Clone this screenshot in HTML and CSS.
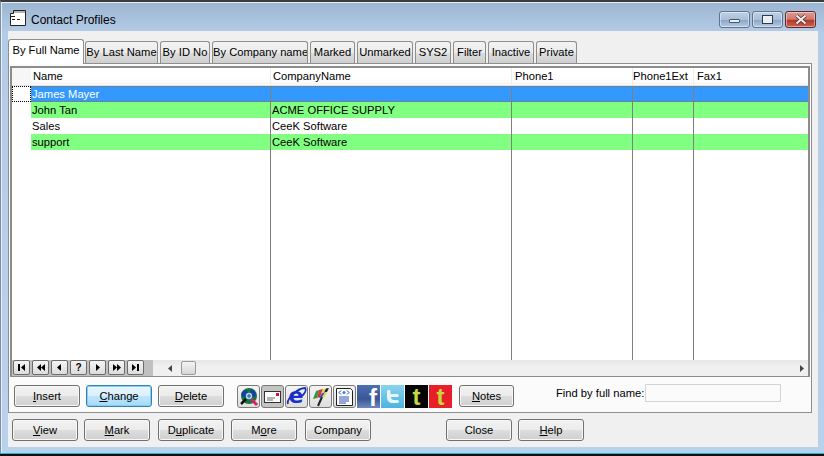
FILE: index.html
```html
<!DOCTYPE html>
<html lang="en">
<head>
<meta charset="utf-8">
<title>Contact Profiles</title>
<link rel="stylesheet" href="styles.css">
</head>
<body>
<div class="window">
  <header class="titlebar">
    <svg class="appicon" width="16" height="17" viewBox="0 0 16 17"><path d="M3.5.5H15.5V15.5H.5V3.5H3.5Z" fill="#fff" stroke="#222"/><rect x="4" y="1" width="11" height="2" fill="#b5b5b5"/><rect x="1" y="6" width="4" height="1" fill="#222"/><rect x="2" y="9" width="3" height="1" fill="#222"/><rect x="7" y="9" width="3" height="1" fill="#222"/></svg>
    <span class="title">Contact Profiles</span>
    <div class="caption-btns">
      <div class="cap"><span class="cap-min"></span></div>
      <div class="cap"><span class="cap-max"></span></div>
      <div class="cap cap-close"><svg width="14" height="11" viewBox="0 0 14 11"><path d="M2.5 1.5 11.5 9.5M11.5 1.5 2.5 9.5" stroke="#3a2a2a" stroke-width="3.6"/><path d="M2.5 1.5 11.5 9.5M11.5 1.5 2.5 9.5" stroke="#f4ecec" stroke-width="2.2"/></svg></div>
    </div>
  </header>
  <main class="client">
    <nav class="tabs">
      <div class="tab active">By Full Name</div>
      <div class="tab w73">By Last Name</div>
      <div class="tab w50">By ID No</div>
      <div class="tab w96">By Company name</div>
      <div class="tab w45">Marked</div>
      <div class="tab w56">Unmarked</div>
      <div class="tab w36">SYS2</div>
      <div class="tab w33">Filter</div>
      <div class="tab w46">Inactive</div>
      <div class="tab w41">Private</div>
    </nav>
    <section class="page">
      <div class="grid-frame">
        <div class="grid">
          <div class="hd ind"></div><div class="hd">Name</div><div class="hd">CompanyName</div><div class="hd pad3">Phone1</div><div class="hd pad0">Phone1Ext</div><div class="hd pad3 last">Fax1</div>

          <div class="ind focus"></div><div class="c sel">James Mayer</div><div class="c sel"></div><div class="c sel"></div><div class="c sel"></div><div class="c sel last"></div>
          <div class="ind"></div><div class="c grn">John Tan</div><div class="c grn">ACME OFFICE SUPPLY</div><div class="c grn"></div><div class="c grn"></div><div class="c grn last"></div>
          <div class="ind"></div><div class="c">Sales</div><div class="c">CeeK Software</div><div class="c"></div><div class="c"></div><div class="c last"></div>
          <div class="ind"></div><div class="c grn">support</div><div class="c grn">CeeK Software</div><div class="c grn"></div><div class="c grn"></div><div class="c grn last"></div>
          <div class="ind"></div><div class="c"></div><div class="c"></div><div class="c"></div><div class="c"></div><div class="c last"></div>
        </div>
        <div class="gridfoot">
          <div class="navigator">
            <div class="nb"><svg width="9" height="9" viewBox="0 0 9 9"><path d="M1 1h2v7H1zM8 1v7L4 4.5z"/></svg></div>
            <div class="nb"><svg width="10" height="9" viewBox="0 0 10 9"><path d="M5 1v7L1 4.5zM9 1v7L5 4.5z"/></svg></div>
            <div class="nb"><svg width="9" height="9" viewBox="0 0 9 9"><path d="M6 1v7L2 4.5z"/></svg></div>
            <div class="nb q">?</div>
            <div class="nb"><svg width="9" height="9" viewBox="0 0 9 9"><path d="M3 1v7l4-3.500z"/></svg></div>
            <div class="nb"><svg width="10" height="9" viewBox="0 0 10 9"><path d="M1 1v7l4-3.500zM5 1v7l4-3.500z"/></svg></div>
            <div class="nb"><svg width="9" height="9" viewBox="0 0 9 9"><path d="M1 1v7l4-3.500zM6 1h2v7H6z"/></svg></div>
          </div>
          <div class="hscroll">
            <svg class="arr" width="5" height="7" viewBox="0 0 5 7"><path d="M4 0v7L0 3.500z" fill="#444"/></svg>
            <div class="thumb"></div>
            <svg class="arr arr-r" width="5" height="7" viewBox="0 0 5 7"><path d="M1 0v7l4-3.500z" fill="#444"/></svg>
          </div>
        </div>
      </div>
      <div class="toolbar">
        <button class="btn"><u>I</u>nsert</button>
        <button class="btn focused"><u>C</u>hange</button>
        <button class="btn"><u>D</u>elete</button>
        <div class="icons">
          <div class="ib"><svg width="20" height="20" viewBox="0 0 20 20"><circle cx="10" cy="9" r="8" fill="#17753f"/><path d="M3 5c3-3 6-2 6 1s-3 6-5 4-2-3-1-5zM12 2c4 1 6 5 4 8-3 0-6-4-4-8z" fill="#1a3f9f"/><circle cx="10" cy="9" r="3.200" fill="#9fdcf0"/><path d="M8 9h4M10 7v4" stroke="#2255aa"/><path d="M12 12l6 6" stroke="#d81f6c" stroke-width="3"/><path d="M2 17l5-5" stroke="#111" stroke-width="2.500"/></svg></div>
          <div class="ib pressed"><svg width="17" height="12" viewBox="0 0 17 12"><rect x=".5" y=".5" width="16" height="11" fill="#fff" stroke="#333"/><rect x="12" y="2" width="3" height="3" fill="#d8102a"/><path d="M3 7h8M3 9h6" stroke="#666"/></svg></div>
          <div class="ib"><svg width="21" height="21" viewBox="0 0 21 21"><text class="ie" x="10" y="17" text-anchor="middle">e</text><path d="M2 18C0 13 12 2 19 2c2 2-1 6-3 8" fill="none" stroke="#1b2fb5" stroke-width="1.800"/></svg></div>
          <div class="ib"><svg width="20" height="20" viewBox="0 0 20 20"><path d="M5 4 8 3 6 11 2 12z" fill="#2a9a45"/><path d="M8 3l4-1-3 8-3 1z" fill="#d8362f"/><path d="M12 2l3-.5-2 4-2.500.5z" fill="#e8d94a"/><path d="M15 1.500l3-.5-2 4-3 .5z" fill="#222"/><path d="M11 6l3-.5-3 5-3 .5z" fill="#3b55c9"/><path d="M14 5.500l2-.5-2 5-3 .5z" fill="#e8d94a"/><path d="M11 10 7 19" stroke="#222" stroke-width="2"/></svg></div>
          <div class="ib"><svg width="19" height="18" viewBox="0 0 19 18"><path d="M1.500.5h14l2 2v15h-16z" fill="#fff" stroke="#222"/><path d="M6 2.500 4 4.500l2 2M12 2.500l2 2-2 2" fill="none" stroke="#1a3fc4"/><circle cx="9" cy="4.500" r="1.500" fill="#2a8ad8"/><path d="M4 9h10M4 11h10M4 13h10M4 15h7" stroke="#2c4fb0"/></svg></div>
          <div class="logo fb"><span>f</span></div>
          <div class="logo tw"><svg width="20" height="20" viewBox="0 0 20 20"><path d="M5 3c0 0 2-1 2.500 1V7h7c1.500 0 2 3 0 3H8c0 2 1 3 3 3h3.500c2 0 2 3 0 3H10c-4 0-6-2-6-6V4c0-1 .5-1 1-1z" fill="#e6f6fb"/></svg></div>
          <div class="logo tb"><span>t</span></div>
          <div class="logo tr"><span>t</span></div>
        </div>
        <button class="btn notes"><u>N</u>otes</button>
        <label class="find-label">Find by full name:</label>
        <div class="find"></div>
      </div>
    </section>
    <footer class="actions">
      <button class="btn"><u>V</u>iew</button>
      <button class="btn"><u>M</u>ark</button>
      <button class="btn dup">D<u>u</u>plicate</button>
      <button class="btn more">M<u>o</u>re</button>
      <button class="btn company">Company</button>
      <button class="btn close">Close</button>
      <button class="btn"><u>H</u>elp</button>
    </footer>
  </main>
  <div class="bottom-edge"></div>
</div>
</body>
</html>
```
FILE: styles.css
```css
* { box-sizing: border-box; }
html, body { margin: 0; padding: 0; }
body { width: 824px; height: 456px; overflow: hidden; background: #fff; font: 11.2px "Liberation Sans", Arial, sans-serif; color: #000; }

.window {
  width: 824px; height: 456px; display: flex; flex-direction: column;
  background: linear-gradient(#9bb5d2 0, #b4cce6 31px, #b9d1ea 100%);
  border-top: 2px solid #3c3c3c;
  border-left: 1px solid #7a8ea5;
  box-shadow: inset 1px 1px 0 #e6eef6;
}

.titlebar { height: 29px; flex: none; display: flex; align-items: center; padding-left: 9px; padding-right: 8px; }
.appicon { flex: none; margin-top: 4px; }
.title { margin-left: 5px; margin-top: 6px; font-size: 12px; }
.caption-btns { margin-left: auto; margin-top: 5px; display: flex; gap: 2px; }
.cap {
  width: 31px; height: 17px; border: 1px solid #5f738c; border-radius: 3px;
  background: linear-gradient(#bed0e5 0, #a9bfd9 50%, #8ba6c6 55%, #b4cbe3 100%);
  box-shadow: inset 0 0 0 1px rgba(255,255,255,.45);
  display: flex; align-items: center; justify-content: center;
}
.cap-min { width: 11px; height: 4px; margin-top: 4px; background: #e9eef5; border: 1px solid #4a5a6c; border-radius: 1px; }
.cap-max { width: 11px; height: 9px; background: #e9eef5; border: 1px solid #2f3b49; box-shadow: inset 0 0 0 1px #eef2f7; padding: 2px; }
.cap-close { border-color: #5a2a2e; background: linear-gradient(#dc9a8f 0, #cf7a6c 48%, #b8382a 55%, #c9614f 100%); }

.client { width: 810px; height: 416px; flex: none; margin-left: 7px; padding-top: 8px; background: #f0f0f0; display: flex; flex-direction: column; }

.tabs { height: 24px; display: flex; align-items: flex-end; gap: 2px; flex: none; position: relative; z-index: 1; }
.tab {
  height: 22px; flex: none; text-align: center; line-height: 21px;
  border: 1px solid #8e8e8e; border-bottom: 0; border-radius: 3px 3px 0 0;
  background: linear-gradient(#f3f3f3 0, #ebebeb 50%, #dcdcdc 55%, #cfcfcf 100%);
  white-space: nowrap; overflow: hidden;
}
.tab.active { width: 76px; height: 25px; margin-bottom: -1px; margin-right: -1px; background: #fff; line-height: 21px; }
.w73 { width: 73px; } .w50 { width: 50px; } .w96 { width: 96px; } .w45 { width: 45px; }
.w56 { width: 56px; } .w36 { width: 36px; } .w33 { width: 33px; } .w46 { width: 46px; } .w41 { width: 41px; }

.page { width: 804px; height: 350px; flex: none; border: 1px solid #8e8e8e; padding: 2px 1px 0; background: #fbfbfb; }

.grid-frame { width: 800px; height: 311px; border: 1px solid #8c8c8c; border-right-width: 2px; border-top-width: 2px; border-left-width: 2px; background: #fff; display: flex; flex-direction: column; }
.grid { flex: 1; min-height: 0; display: grid; grid-template-columns: 19px 240px 241px 121px 61px 1fr; grid-template-rows: 18px 16px 16px 16px 16px 1fr; line-height: 16px; }
.hd { background: linear-gradient(#fff 0, #fff 60%, #f6f6f6 100%); border-right: 1px solid #ededed; border-bottom: 1px solid #e4e4e4; padding-left: 2px; line-height: 16px; white-space: nowrap; }
.hd.pad3 { padding-left: 3px; }
.hd.pad0 { padding-left: 0; }
.hd.ind { padding: 0; background: #f6f6f6; border-right: 0; }
.ind.focus { border: 1px dotted #000; }
.c { border-right: 1px solid #808080; padding-left: 1px; white-space: nowrap; overflow: hidden; }
.c.last, .hd.last { border-right: 0; }
.sel { background: #3399ff; color: #fff; border-top: 1px dotted #a86a2a; border-bottom: 1px dotted #a86a2a; line-height: 14px; }
.grn { background: #80ff80; }

.gridfoot { height: 16px; flex: none; display: flex; }
.navigator { width: 141px; flex: none; height: 16px; padding-left: 1px; background: #c0c0c0; display: flex; gap: 2px; }
.nb { width: 17px; height: 15px; border: 1px solid #6b6b6b; border-radius: 2px; background: linear-gradient(#f4f4f4, #dcdcdc); display: flex; align-items: center; justify-content: center; }
.nb svg { fill: #000; }
.nb.q { font-size: 10px; font-weight: bold; line-height: 12px; }
.hscroll { flex: 1; display: flex; align-items: center; padding-left: 15px; padding-right: 4px; background: linear-gradient(#e6e6e6, #f0f0f0 40%, #f0f0f0); }
.thumb { width: 15px; height: 14px; margin-left: 8px; border: 1px solid #9a9a9a; border-radius: 2px; background: linear-gradient(#f4f4f4, #d6d6d6); }
.arr-r { margin-left: auto; }

.toolbar { display: flex; align-items: flex-start; height: 36px; padding: 8px 0 0 4px; }
.btn {
  width: 66px; height: 22px; flex: none; padding: 0; margin: 0;
  font: inherit; color: #000; text-align: center;
  border: 1px solid #707070; border-radius: 3px;
  background: linear-gradient(#f2f2f2 0, #ebebeb 50%, #dddddd 52%, #cfcfcf 100%);
  box-shadow: inset 0 0 0 1px #f8f8f8;
}
.toolbar .btn + .btn { margin-left: 6px; }
.btn.focused { border-color: #3c7fb1; background: linear-gradient(#eaf6fd 0, #d9f0fc 50%, #bee6fd 52%, #a7d9f5 100%); box-shadow: inset 0 0 0 1px #7fd0f5; }

.icons { display: flex; gap: 1px; margin-left: 13px; }
.ib, .logo { width: 23px; height: 23px; flex: none; display: flex; align-items: center; justify-content: center; overflow: hidden; }
.ib { border: 1px solid #7a7a7a; border-radius: 3px; background: linear-gradient(#f4f4f4, #dedede); }
.ib.pressed { background: #c4c4c4; }
.ie { font: bold 22px "DejaVu Sans", sans-serif; fill: #1b2fd0; }
.logo span { font-weight: bold; line-height: 22px; }
.fb { background: linear-gradient(#4d6fb3, #3a5795 60%, #6f89bd); color: #fff; justify-content: flex-end; padding-right: 3px; }
.fb span { font: bold 24px "Liberation Sans", Arial, sans-serif; margin-top: 3px; }
.tw { background: linear-gradient(#8ad3ef, #4cb4de); }
.tb, .tr { color: #c5d93a; }
.tb span, .tr span { font: bold 24px "Liberation Sans", Arial, sans-serif; }
.tb { background: #050505; }
.tr { background: #e81f2a; }
.toolbar .btn.notes { width: 55px; margin-left: 7px; }
.find-label { width: 89px; flex: none; margin-left: 42px; margin-top: 1px; line-height: 14px; white-space: nowrap; }
.find { width: 136px; height: 18px; margin-top: -1px; background: #fbfbfb; border: 1px solid #d4d4d4; }

.actions { display: flex; padding: 6px 0 0 4px; flex: none; }
.actions .btn { margin-right: 6px; }
.actions .dup { margin-left: 2px; margin-right: 7px; }
.actions .more { margin-right: 8px; }
.actions .company { margin-right: 75px; }
.bottom-edge { margin-top: auto; height: 3px; flex: none; margin-left: -1px; border-top: 1px solid #1fb6c9; background: #111; }
```
